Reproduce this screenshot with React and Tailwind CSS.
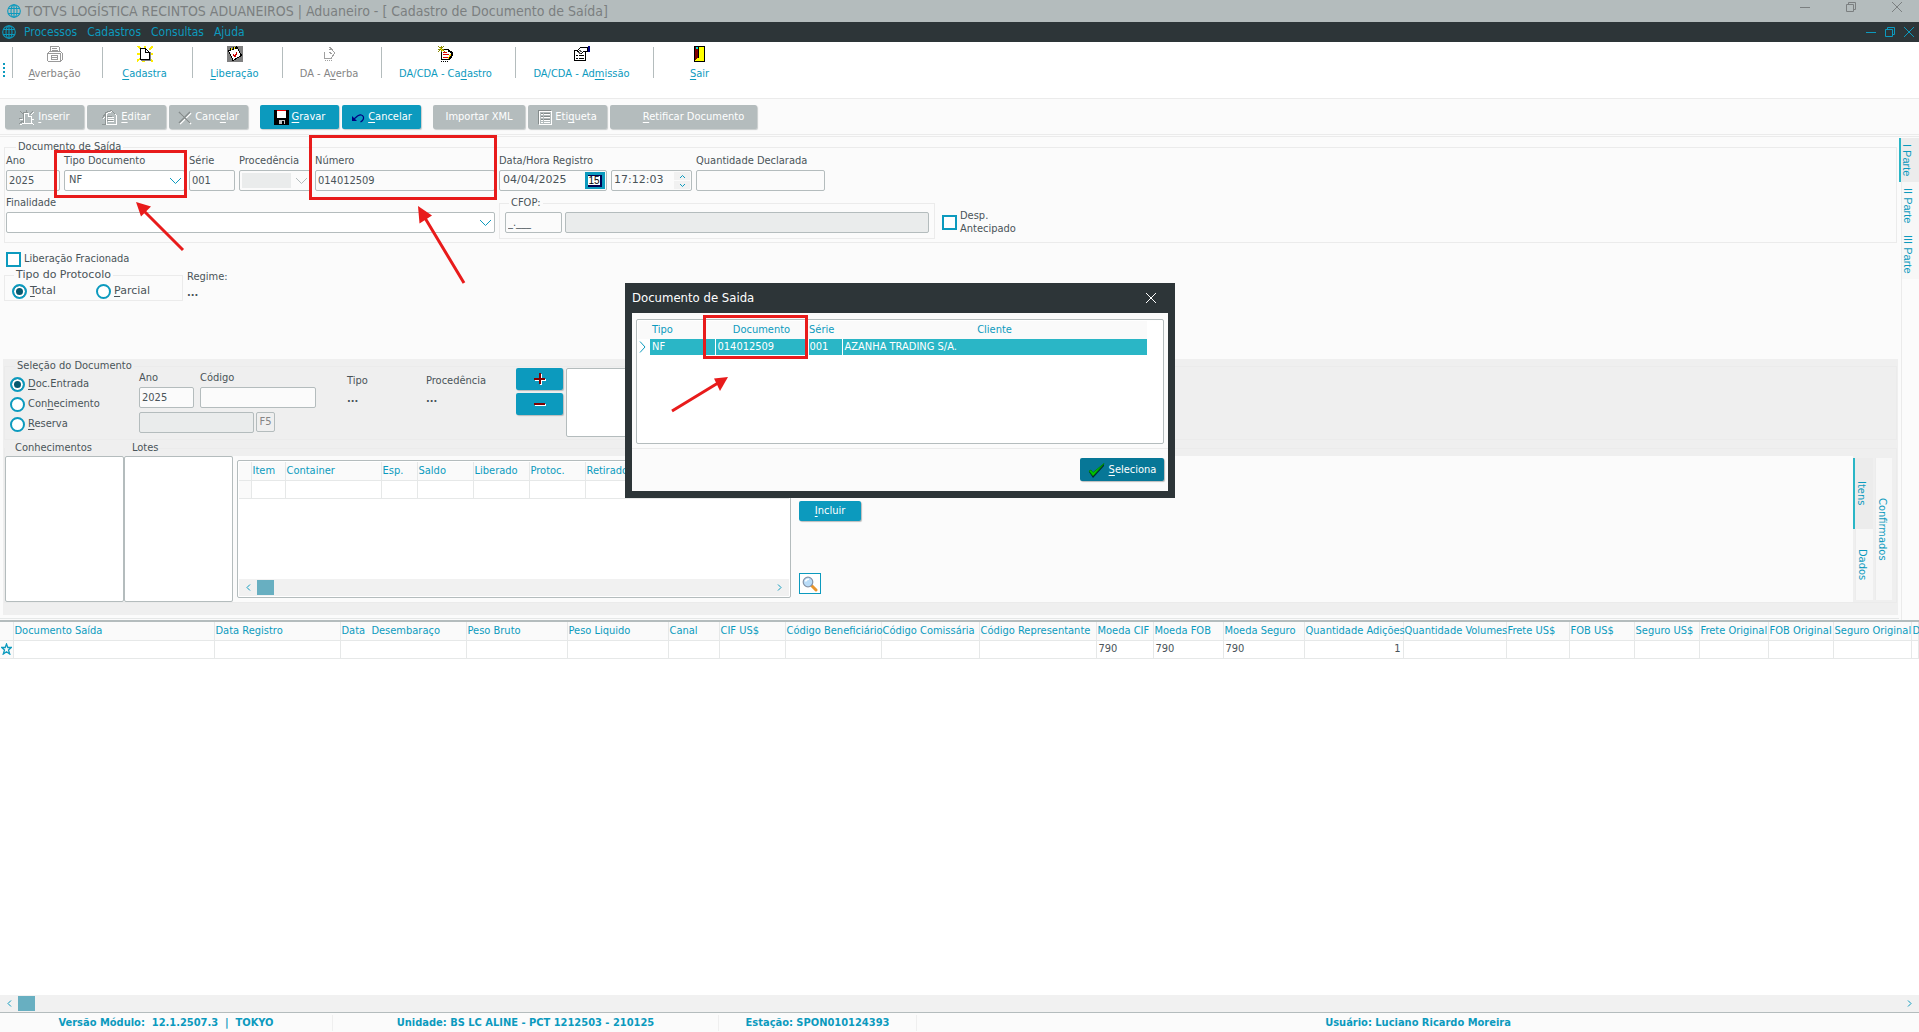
const DOC_COLUMNS = [
    { label: "Documento Saída", width: 201 },
    { label: "Data Registro", width: 126 },
    { label: "Data  Desembaraço", width: 126 },
    { label: "Peso Bruto", width: 101 },
    { label: "Peso Liquido", width: 101 },
    { label: "Canal", width: 51 },
    { label: "CIF US$", width: 66 },
    { label: "Código Beneficiário", width: 96 },
    { label: "Código Comissária", width: 98 },
    { label: "Código Representante", width: 117 },
    { label: "Moeda CIF", width: 57, value: "790" },
    { label: "Moeda FOB", width: 70, value: "790" },
    { label: "Moeda Seguro", width: 81, value: "790" },
    { label: "Quantidade Adições", width: 99, value: "1", right: true },
    { label: "Quantidade Volumes", width: 103 },
    { label: "Frete US$", width: 63 },
    { label: "FOB US$", width: 65 },
    { label: "Seguro US$", width: 65 },
    { label: "Frete Original", width: 69 },
    { label: "FOB Original", width: 65 },
    { label: "Seguro Original", width: 78 },
    { label: "D" }
];

const ITEM_COLUMNS = [
    { label: "Item", width: 34 },
    { label: "Container", width: 96 },
    { label: "Esp.", width: 36 },
    { label: "Saldo", width: 56 },
    { label: "Liberado", width: 56 },
    { label: "Protoc.", width: 56 },
    { label: "Retirado", width: 56 },
    { label: "" }
];

const INPUT = "h-[21px] w-full rounded-xs border border-[#b4bcbd] bg-[#fbfbfb] px-[2px] text-[#4a5459] outline-none disabled:bg-[#eaecec]";

// "&" marks the access key
function Mnemonic({ text }) {

    const [before, after] = text.split("&");

    if (after === undefined) return <span>{text}</span>;

    return (
        <span>
            {before}
            <span className="underline underline-offset-2">{after[0]}</span>
            {after.slice(1)}
        </span>
    );

}

function Chevron({ className }) {

    return (
        <svg viewBox="0 0 13 8" className={`h-2 w-[13px] fill-none stroke-current ${className}`}>
            <path d="M1 1l5.500 5.500L12 1" />
        </svg>
    );

}

function Small({ d, size = 7 }) {

    return (
        <svg viewBox="0 0 7 7" width={size} height={size} className="fill-none stroke-[#0c9abe]">
            <path d={d} />
        </svg>
    );

}

/* ---- icons ---- */

function GlobeIcon({ className }) {

    return (
        <svg viewBox="0 0 14 14" className={`h-3.5 w-3.5 shrink-0 fill-none stroke-[#0c9abe] ${className}`} strokeWidth="1.100">
            <circle cx="7" cy="7" r="6.300" />
            <ellipse cx="7" cy="7" rx="3" ry="6.300" />
            <path d="M1.200 4.500h11.600M1.200 9.500h11.600M7 .700v12.600" />
        </svg>
    );

}

function DrawerIcon() {

    return (
        <svg viewBox="0 0 16 16" className="h-4 w-4 fill-none stroke-[#9a9a9a]" shapeRendering="crispEdges">
            <path d="M3.500 5V.500h8l1 1V5M5 2.500h5M5 4.500h6M.500 15V7.500l2-2h11l2 2v6l-2 2H.500M.500 7.500h13v8M4.500 9.500h6v4h-6zM5 11.500h5" />
        </svg>
    );

}

function NewPageIcon() {

    return (
        <svg viewBox="0 0 16 16" className="h-4 w-4" shapeRendering="crispEdges">
            <path d="M1 0l4 4M16 0l-4 4M0 15l4-3M16 16l-4-4M0 8h3M13 8h3M8 0v3M5 15h3" stroke="#ffee00" strokeWidth="2" />
            <path d="M4 14.500h10M13.500 6v8" stroke="#808080" />
            <path d="M3.500 2.500h5l4 4v7h-9z" fill="#fff" stroke="#000" />
            <path d="M8.500 2.500v4h4" fill="none" stroke="#000" />
        </svg>
    );

}

function ReleaseIcon() {

    return (
        <svg viewBox="0 0 16 16" className="h-4 w-4" shapeRendering="crispEdges">
            <rect width="16" height="16" rx="1" fill="#808080" />
            <path d="M1.500 4.500L10 1.500l4.500 8L6 14.500z" fill="#fff" stroke="#000" />
            <path d="M3 2l1 3M6 1l1 3M9 0l1 3" stroke="#000" />
            <path d="M4 2l1 2M7 1l1 2" stroke="#ffee00" />
            <path d="M6 8l2 3 2-5" fill="none" stroke="#d00000" />
        </svg>
    );

}

function EntryIcon() {

    return (
        <svg viewBox="0 0 16 16" className="h-4 w-4 fill-none stroke-[#a0a0a0]" shapeRendering="crispEdges">
            <path d="M8 3l3 1 3 3-4 5M8 6l3 2M8 1l4 3M3.500 6v6.500h7" />
            <path d="M4 14.500h7" strokeDasharray="1 1" />
        </svg>
    );

}

function RegisterIcon() {

    return (
        <svg viewBox="0 0 16 16" className="h-4 w-4" shapeRendering="crispEdges">
            <path d="M3.500 3.500h6l4 4-3 6h-7z" fill="#fff" stroke="#000" />
            <path d="M5 6.500h4M5 8.500h6M5 11h5" stroke="#e00000" />
            <path d="M0 0l7 6M0 6l6-6M3.500 0v6M0 3.500h6" stroke="#8a8a00" />
            <path d="M2 2l3 3" stroke="#ffee00" />
            <path d="M10 4l4 3v2l-3 5" fill="none" stroke="#000" strokeWidth="2" />
            <path d="M10 13l3-5" stroke="#ffcc00" />
            <path d="M3 15.500h7" stroke="#000" strokeDasharray="1 1" />
        </svg>
    );

}

function AdmissionIcon() {

    return (
        <svg viewBox="0 0 16 16" className="h-4 w-4" shapeRendering="crispEdges">
            <path d="M.500 4.500h11v10H.500z" fill="#fff" stroke="#000" />
            <path d="M2 9.500h2M5 9.500h5M2 12.500h2M5 12.500h5" stroke="#000" />
            <path d="M3 5l4-4h6v4h-3l-3 3z" fill="#fff" stroke="#000" />
            <path d="M4 6l3 2M5 4l3 2" stroke="#555" />
            <path d="M14.500 0v6" stroke="#000080" strokeWidth="2" />
        </svg>
    );

}

function ExitIcon() {

    return (
        <svg viewBox="0 0 11 16" className="h-4 w-[11px]" shapeRendering="crispEdges">
            <rect x=".500" y=".500" width="10" height="15" fill="#ffff00" stroke="#000" />
            <path d="M1 1h3v10l-3 4z" fill="#800000" />
            <path d="M4.500 1v11" stroke="#000" />
            <path d="M2 2h2" stroke="#00e0e0" strokeWidth="2" />
        </svg>
    );

}

function InsertIcon() {

    return (
        <svg viewBox="0 0 16 16" className="h-4 w-4 fill-none" shapeRendering="crispEdges">
            <path d="M5.500 3.500h4v3h3v7h-7zM2 2l3 3M15 2l-3 3M1 15l4-2M15 15l-2-2M1 9.500h3M13 9.500h2" stroke="#fff" />
            <path d="M4.500 13V2.500h4M1 1l3 3M14 1l-3 3M0 14l4-3M0 8.500h3M7.500 0v2" stroke="#8f9696" />
        </svg>
    );

}

function EditIcon() {

    return (
        <svg viewBox="0 0 16 16" className="h-4 w-4 fill-none" shapeRendering="crispEdges">
            <path d="M4.500 3.500l6-2 4 4v9h-10zM6 7.500h6M6 9.500h6M6 11.500h6M1 9l4-4" stroke="#fff" />
            <path d="M3.500 2.500l6-2 4 4M3.500 3v11M5 6.500h5M5 10.500h6M0 8l4-5M0 14h4" stroke="#8f9696" />
        </svg>
    );

}

function CrossIcon() {

    return (
        <svg viewBox="0 0 14 14" className="h-3.5 w-3.5 fill-none">
            <path d="M2 2l11 11M13 2L2 13" stroke="#fff" strokeWidth="1.500" />
            <path d="M1 1l11 11M12 1L1 12" stroke="#858c8c" strokeWidth="1.500" />
        </svg>
    );

}

function FloppyIcon() {

    return (
        <svg viewBox="0 0 16 16" className="h-[15px] w-[15px]" shapeRendering="crispEdges">
            <path d="M0 0h16v16H1l-1-1z" fill="#000" />
            <rect x="3" y="1" width="10" height="8" fill="#fff" />
            <rect x="3" width="10" height="1" fill="#f00000" />
            <rect x="5" y="11" width="7" height="4" fill="#c0c0c0" />
            <rect x="9" y="12" width="2" height="3" fill="#000" />
        </svg>
    );

}

function UndoIcon() {

    return (
        <svg viewBox="0 0 14 10" className="h-2.5 w-3.5 fill-none stroke-[#000080]">
            <path d="M3 6l3.500-3Q11 .500 12.500 4q.500 3-3 5" strokeWidth="1.200" />
            <path d="M1 3v5h5z" fill="#000080" stroke="none" />
        </svg>
    );

}

function LabelIcon() {

    return (
        <svg viewBox="0 0 14 15" className="h-[15px] w-3.5 fill-none" shapeRendering="crispEdges">
            <path d="M1.500 1.500h12v13h-12z" stroke="#fff" />
            <path d="M3 4.500h2M6 4.500h6M3 7.500h2M6 7.500h6M3 10.500h2M6 10.500h6M3 12.500h2M6 12.500h6" stroke="#fff" />
            <path d="M.500 14V.500H13M3 3.500h2M6 3.500h6M3 6.500h2M6 6.500h6M3 9.500h2M6 9.500h6" stroke="#858c8c" />
        </svg>
    );

}

function CheckIcon() {

    return (
        <svg viewBox="0 0 17 15" className="h-[15px] w-[17px]">
            <path d="M1 9l4 6L16 3V1L5 11 3 8z" fill="#002b33" />
            <path d="M1 8l4 5L16 1v-.500L5 9.500 3 7z" fill="#00c800" stroke="#008000" strokeWidth=".800" />
        </svg>
    );

}

function LensIcon() {

    return (
        <svg viewBox="0 0 16 16" className="h-4 w-4">
            <path d="M9.500 9.500l4.500 4.500" stroke="#e8952c" strokeWidth="3" strokeLinecap="round" />
            <circle cx="6" cy="6" r="4.800" fill="#b9dcf8" stroke="#8593a8" strokeWidth="1.200" />
            <path d="M3.500 5.500Q4 3 7 3.200" fill="none" stroke="#fff" strokeWidth="1.500" />
        </svg>
    );

}

function WindowButtons({ className, gap }) {

    return (
        <div className={`flex items-center ${gap} ${className}`}>
            <button aria-label="Minimizar">
                <svg viewBox="0 0 10 10" className="h-2.5 w-2.5 stroke-current"><path d="M0 5.500h10" /></svg>
            </button>
            <button aria-label="Restaurar">
                <svg viewBox="0 0 10 10" className="h-2.5 w-2.5 fill-none stroke-current"><path d="M.500 2.500h7v7h-7zM2.500 2.500v-2h7v7h-2" /></svg>
            </button>
            <button aria-label="Fechar">
                <svg viewBox="0 0 10 10" className="h-2.5 w-2.5 fill-none stroke-current"><path d="M0 0l10 10M10 0L0 10" /></svg>
            </button>
        </div>
    );

}

/* ---- building blocks ---- */

function ToolItem({ icon, label, disabled, className }) {

    return (
        <div className={`flex items-start ${className}`}>
            <span className="mt-px h-[31px] w-px bg-[#b4bcbd]" />
            <button
                disabled={disabled}
                className={`flex grow flex-col items-center gap-1 pr-1.5 leading-4 ${
                    disabled ? "text-[#858585]" : "text-[#0c9abe]"
                }`}
            >
                {icon}
                <Mnemonic text={label} />
            </button>
        </div>
    );

}

function ActionButton({ icon, label, disabled, className }) {

    return (
        <button
            disabled={disabled}
            className={`flex h-6 items-center justify-center gap-[3px] rounded-xs pt-[2px] text-white shadow-[1px_1px_1px_#c8cccc] ${className} ${
                disabled ? "bg-[#b4bcbd]" : "bg-[#0c9abe]"
            }`}
        >
            {icon}
            <Mnemonic text={label} />
        </button>
    );

}

function Field({ id, label, className, children }) {

    return (
        <div className={`flex flex-col gap-px ${className}`}>
            <label htmlFor={id} className="h-4 leading-4 whitespace-nowrap">{label}</label>
            {children}
        </div>
    );

}

function Dropdown({ id, value, disabled }) {

    return (
        <span className="relative block">
            <select
                id={id}
                disabled={disabled}
                defaultValue={value}
                className="h-[21px] w-full appearance-none rounded-xs border border-[#b4bcbd] bg-white px-1 text-[#4a5459] disabled:bg-[#fbfbfb]"
            >
                <option>{value}</option>
            </select>
            {disabled && <span className="absolute top-[3px] left-[3px] h-[15px] w-[49px] bg-[#eaecec]" />}
            <Chevron className={`pointer-events-none absolute top-[7px] right-[3px] ${disabled ? "text-[#b4bcbd]" : "text-[#0c9abe]"}`} />
        </span>
    );

}

function Radio({ name, label, checked }) {

    return (
        <label className="flex items-center gap-[3px]">
            <input
                type="radio"
                name={name}
                defaultChecked={checked}
                className="h-[15px] w-[15px] shrink-0 appearance-none rounded-full border-2 border-[#0c9abe] bg-white checked:bg-[#075a70] checked:shadow-[inset_0_0_0_2px_#fff]"
            />
            <Mnemonic text={label} />
        </label>
    );

}

function Checkbox({ className, children }) {

    return (
        <label className={`flex items-center gap-[3px] ${className}`}>
            <input type="checkbox" className="h-[15px] w-[15px] shrink-0 appearance-none border-2 border-[#0c9abe] bg-white" />
            <span>{children}</span>
        </label>
    );

}

function VTab({ active, className, children }) {

    return (
        <button
            className={`flex items-end justify-center leading-3 text-[#0c9abe] [writing-mode:vertical-rl] ${className} ${
                active ? "border-l-2 border-[#2ab6c6] bg-[#ececec]" : "ml-[2px] border-l border-[#ececec] bg-[#f7f7f7]"
            }`}
        >
            {children}
        </button>
    );

}

function ScrollBar() {

    return (
        <div className="flex h-[17px] shrink-0 items-center bg-[#f1f1f1] px-1.5">
            <Small d="M5 .500L2 3.500l3 3" />
            <span className="ml-[5px] h-[15px] w-[17px] bg-[#68afc1]" />
            <span className="grow" />
            <Small d="M2 .500l3 3-3 3" />
        </div>
    );

}

function Grid({ columns, marker, indicator }) {

    return (
        <table className="w-full table-fixed border-collapse text-left whitespace-pre">
            <thead>
                <tr className="h-[18px] bg-[#fafafa] text-[#0c9abe]">
                    <th className={`${indicator} border-r border-b border-[#e6e8e8] p-0`} />
                    {columns.map((col) => (
                        <th
                            key={col.label}
                            style={{ width: col.width }}
                            className="border-r border-b border-[#e6e8e8] p-0 pl-px font-normal"
                        >
                            {col.label}
                        </th>
                    ))}
                </tr>
            </thead>
            <tbody>
                <tr className="h-[18px] bg-white">
                    <td className="border-r border-b border-[#e6e8e8] bg-[#fafafa] p-0">{marker}</td>
                    {columns.map((col) => (
                        <td
                            key={col.label}
                            className={`border-r border-b border-[#e6e8e8] p-0 px-[2px] ${col.right ? "text-right" : ""}`}
                        >
                            {col.value}
                        </td>
                    ))}
                </tr>
            </tbody>
        </table>
    );

}

function Toolbar() {

    return (
        <div className="flex h-[57px] items-start border-b border-[#ebebeb] bg-white pt-1">
            <div className="mt-[17px] mr-[7px] ml-[3px] h-[14px] border-l-2 border-dotted border-[#0c9abe]" />
            <ToolItem className="w-[90px]" label="&Averbação" icon={<DrawerIcon />} disabled />
            <ToolItem className="w-[90px]" label="&Cadastra" icon={<NewPageIcon />} />
            <ToolItem className="w-[90px]" label="&Liberação" icon={<ReleaseIcon />} />
            <ToolItem className="w-[99px]" label="DA - A&verba" icon={<EntryIcon />} disabled />
            <ToolItem className="w-[134px]" label="DA/CDA - Ca&dastro" icon={<RegisterIcon />} />
            <ToolItem className="w-[138px]" label="DA/CDA - Ad&missão" icon={<AdmissionIcon />} />
            <ToolItem className="w-[98px]" label="&Sair" icon={<ExitIcon />} />
        </div>
    );

}

function Actions() {

    return (
        <div className="flex h-9 items-center gap-[3px] border-b border-[#ebebeb] pl-[5px]">
            <ActionButton className="w-[79px]" label="&Inserir" icon={<InsertIcon />} disabled />
            <ActionButton className="w-[79px]" label="&Editar" icon={<EditIcon />} disabled />
            <ActionButton className="w-[79px]" label="Canc&elar" icon={<CrossIcon />} disabled />
            <ActionButton className="ml-[9px] w-[79px]" label="&Gravar" icon={<FloppyIcon />} />
            <ActionButton className="w-[79px]" label="&Cancelar" icon={<UndoIcon />} />
            <ActionButton className="ml-[9px] w-[92px]" label="Importar XML" disabled />
            <ActionButton className="w-[79px]" label="Eti&queta" icon={<LabelIcon />} disabled />
            <ActionButton className="w-[147px] pl-5" label="&Retificar Documento" disabled />
        </div>
    );

}

function DocumentForm() {

    return (
        <fieldset className="mr-[2px] ml-1 border border-[#ebebeb] pb-[3px] pl-px">
            <legend className="ml-2.5 px-[2px] leading-3">Documento de Saída</legend>
            <div className="flex gap-1">
                <Field id="ano" label="Ano" className="w-[54px]">
                    <input id="ano" className={INPUT} defaultValue="2025" />
                </Field>
                <Field id="tipo" label="Tipo Documento" className="w-[121px]">
                    <Dropdown id="tipo" value="NF" />
                </Field>
                <Field id="serie" label="Série" className="w-[46px]">
                    <input id="serie" className={INPUT} defaultValue="001" />
                </Field>
                <Field id="proc" label="Procedência" className="w-[72px]">
                    <Dropdown id="proc" value="" disabled />
                </Field>
                <Field id="numero" label="Número" className="w-[180px]">
                    <input id="numero" className={INPUT} defaultValue="014012509" />
                </Field>
                <Field id="data" label="Data/Hora Registro" className="w-[108px]">
                    <div className="flex h-[21px] items-center rounded-xs border border-[#b4bcbd] pr-px">
                        <input id="data" className="w-0 grow px-[3px] font-['DejaVu_Sans'] outline-none" defaultValue="04/04/2025" />
                        <button aria-label="Calendário" className="flex h-[17px] w-5 items-center justify-center bg-[#0c9abe]">
                            <span className="h-3 w-3.5 border-t border-r-2 border-b-2 border-[#000050] bg-white text-center font-['Liberation_Sans'] text-[10px] leading-[9px] text-black">15</span>
                        </button>
                    </div>
                </Field>
                <div className="mt-[17px] flex h-[21px] w-[81px] items-center rounded-xs border border-[#b4bcbd] pr-px">
                    <input aria-label="Hora" className="w-0 grow pl-[2px] font-['DejaVu_Sans'] outline-none" defaultValue="17:12:03" />
                    <div className="flex flex-col gap-px">
                        <button aria-label="Mais" className="flex h-2 w-4 items-center justify-center bg-[#f1f1f1]"><Small d="M1 5l2.500-2.500L6 5" /></button>
                        <button aria-label="Menos" className="flex h-2 w-4 items-center justify-center bg-[#f1f1f1]"><Small d="M1 2l2.500 2.500L6 2" /></button>
                    </div>
                </div>
                <Field id="qtd" label="Quantidade Declarada" className="w-[129px]">
                    <input id="qtd" className={INPUT} />
                </Field>
            </div>
            <div className="flex items-start gap-1 pt-1">
                <Field id="finalidade" label="Finalidade" className="w-[489px]">
                    <Dropdown id="finalidade" value="" />
                </Field>
                <fieldset className="w-[436px] border border-[#ebebeb] px-[5px] pb-[5px]">
                    <legend className="ml-1 px-[2px] leading-4">CFOP:</legend>
                    <div className="flex gap-[3px] pt-px">
                        <input aria-label="CFOP" className={`${INPUT} max-w-[57px]`} defaultValue="_.___" />
                        <input aria-label="Descrição CFOP" className={INPUT} disabled />
                    </div>
                </fieldset>
                <Checkbox className="ml-[3px] pt-3.5 leading-[13px]">Desp.<br />Antecipado</Checkbox>
            </div>
        </fieldset>
    );

}

function Protocol() {

    return (
        <div className="pb-[58px] pl-1">
            <Checkbox className="mt-2 ml-[2px] h-4">Liberação Fracionada</Checkbox>
            <div className="flex gap-1">
                <fieldset className="w-[179px] border border-[#ebebeb] pl-[7px] font-['DejaVu_Sans']">
                    <legend className="ml-[2px] px-[2px] leading-4">Tipo do Protocolo</legend>
                    <div className="flex h-4 items-center">
                        <div className="w-[84px]"><Radio name="protocolo" label="&Total" checked /></div>
                        <Radio name="protocolo" label="&Parcial" />
                    </div>
                </fieldset>
                <div className="flex flex-col pt-[2px] leading-4">
                    <span>Regime:</span>
                    <span className="font-bold">...</span>
                </div>
            </div>
        </div>
    );

}

function Selection() {

    return (
        <fieldset className="mx-px mt-px border border-[#ebebeb] pb-[2px] pl-[5px]">
            <legend className="ml-[5px] px-[2px] leading-3">Seleção do Documento</legend>
            <div className="flex items-start">
                <div className="flex w-[129px] flex-col pt-[2px] leading-5">
                    <Radio name="origem" label="&Doc.Entrada" checked />
                    <Radio name="origem" label="Con&hecimento" />
                    <Radio name="origem" label="&Reserva" />
                </div>
                <div className="-mt-[2px] flex w-[208px] flex-col gap-1">
                    <div className="flex gap-1.5">
                        <Field id="sel-ano" label="Ano" className="w-[55px]">
                            <input id="sel-ano" className={INPUT} defaultValue="2025" />
                        </Field>
                        <Field id="codigo" label="Código" className="w-[116px]">
                            <input id="codigo" className={INPUT} />
                        </Field>
                    </div>
                    <div className="flex gap-[2px]">
                        <input aria-label="Reserva" className={`${INPUT} max-w-[115px]`} disabled />
                        <button className="h-5 w-[19px] rounded-xs border border-[#b4bcbd] text-[#858585]">F5</button>
                    </div>
                </div>
                <div className="flex w-[79px] flex-col leading-[18px]">
                    <span>Tipo</span>
                    <span className="font-bold">...</span>
                </div>
                <div className="flex w-[90px] flex-col leading-[18px]">
                    <span>Procedência</span>
                    <span className="font-bold">...</span>
                </div>
                <div className="-mt-1 flex flex-col gap-[3px]">
                    <button aria-label="Adicionar" className="flex h-[22px] w-[47px] items-center justify-center rounded-xs bg-[#0c9abe] shadow-[1px_1px_1px_#bbb]">
                        <svg viewBox="0 0 12 12" className="h-3 w-3" shapeRendering="crispEdges">
                            <path d="M1 7h11M7 1v11" stroke="#fff" strokeWidth="2" />
                            <path d="M0 6h11M6 0v11" stroke="#800000" strokeWidth="2" />
                        </svg>
                    </button>
                    <button aria-label="Remover" className="flex h-[22px] w-[47px] items-center justify-center rounded-xs bg-[#0c9abe] shadow-[1px_1px_1px_#bbb]">
                        <svg viewBox="0 0 12 12" className="h-3 w-3" shapeRendering="crispEdges">
                            <path d="M1 7h11" stroke="#fff" strokeWidth="2" />
                            <path d="M0 6h11" stroke="#800000" strokeWidth="2" />
                        </svg>
                    </button>
                </div>
                <div className="-mt-1 ml-[3px] h-[69px] w-[300px] rounded-xs border border-[#b4bcbd] bg-white" />
            </div>
        </fieldset>
    );

}

function Items() {

    return (
        <fieldset className="mx-px border border-[#ebebeb]">
            <legend className="flex pl-2.5 leading-4">
                <span className="w-[117px]">Conhecimentos</span>
                <span>Lotes</span>
            </legend>
            <div className="flex h-[146px]">
                <div className="w-[119px] rounded-xs border border-[#b4bcbd] bg-white" />
                <div className="w-[109px] rounded-xs border border-[#b4bcbd] bg-white" />
                <div className="flex grow gap-2 bg-[#fbfbfb] py-1 pl-1">
                    <div className="flex w-[554px] flex-col overflow-hidden rounded-xs border border-[#b4bcbd] bg-white p-px">
                        <Grid columns={ITEM_COLUMNS} indicator="w-3" />
                        <span className="grow" />
                        <ScrollBar />
                    </div>
                    <div className="flex flex-col items-start justify-between pt-[41px] pb-1">
                        <button className="h-5 w-[62px] rounded-xs bg-[#0c9abe] text-white shadow-[1px_1px_1px_#bbb]"><Mnemonic text="&Incluir" /></button>
                        <button aria-label="Pesquisar" className="flex h-[21px] w-[22px] items-center justify-center border border-[#0c9abe] bg-white"><LensIcon /></button>
                    </div>
                </div>
                <div className="flex w-5 flex-col py-0.5">
                    <VTab active className="h-[71px]">Itens</VTab>
                    <VTab className="h-[71px]">Dados</VTab>
                </div>
                <div className="mr-1 flex py-0.5">
                    <VTab className="w-[17px]">Confirmados</VTab>
                </div>
            </div>
        </fieldset>
    );

}

function Dialog() {

    return (
        <section
            role="dialog"
            aria-label="Documento de Saida"
            className="absolute top-[283px] left-[625px] flex w-[550px] flex-col bg-[#2d3538] px-[7px] pb-[7px]"
        >
            <header className="flex h-[30px] items-center justify-between pr-3 text-white">
                <h2 className="text-[13px] font-medium">Documento de Saida</h2>
                <button aria-label="Fechar">
                    <svg viewBox="0 0 10 10" className="h-2.5 w-2.5 stroke-current"><path d="M0 0l10 10M10 0L0 10" /></svg>
                </button>
            </header>
            <div className="border-b border-[#ebebeb] bg-[#fbfbfb] px-1 pt-1.5 pb-1">
                <div className="h-[125px] rounded-xs border border-[#b4bcbd] bg-white p-px pr-4">
                    <table className="w-full table-fixed border-collapse text-left">
                        <thead>
                            <tr className="h-[18px] bg-[#fafafa] text-[#0c9abe]">
                                <th className="w-3 p-0" />
                                <th className="w-[65px] p-0 pl-[2px] font-normal">Tipo</th>
                                <th className="w-[93px] p-0 text-center font-normal">Documento</th>
                                <th className="w-[34px] p-0 pl-px font-normal">Série</th>
                                <th className="p-0 text-center font-normal">Cliente</th>
                            </tr>
                        </thead>
                        <tbody>
                            <tr className="h-4 bg-[#2ab6c6] leading-4 text-white">
                                <td className="bg-white p-0 pl-px">
                                    <svg viewBox="0 0 7 12" className="h-3 w-[7px] fill-none stroke-[#0c9abe]"><path d="M1 .500L6 6l-5 5.500" /></svg>
                                </td>
                                <td className="border-r border-white p-0 pl-[2px]">NF</td>
                                <td className="border-r border-white p-0 pl-[2px]">014012509</td>
                                <td className="border-r border-white p-0 pl-px">001</td>
                                <td className="p-0 pl-[2px]">AZANHA TRADING S/A.</td>
                            </tr>
                        </tbody>
                    </table>
                </div>
            </div>
            <footer className="flex justify-end bg-[#fbfbfb] px-1 pt-[9px] pb-2.5">
                <button className="flex h-[23px] w-[84px] items-center justify-center gap-1 rounded-xs bg-[#077797] pt-[2px] text-white shadow-[1px_1px_1px_#bbb]">
                    <CheckIcon />
                    <Mnemonic text="&Seleciona" />
                </button>
            </footer>
        </section>
    );

}

// red call-outs drawn over the window
function Callouts() {

    return (
        <svg className="pointer-events-none absolute inset-0 h-full w-full">
            <g fill="none" stroke="#e81b1b" strokeWidth="3">
                <rect x="55.500" y="151.500" width="130" height="45" />
                <rect x="310.500" y="136.500" width="185" height="62" />
                <rect x="704.500" y="316.500" width="102" height="41" />
                <path d="M183 250L144 211M464 283L425 218M672 411l46-28" />
            </g>
            <g fill="#e81b1b">
                <path d="M136 202l15 4.500-10 10z" />
                <path d="M418 206l14 9.500-12.500 8z" />
                <path d="M728 377l-8 14-6-12.500z" />
            </g>
        </svg>
    );

}

export default function App() {

    return (
        <div className="relative flex min-h-screen flex-col overflow-hidden bg-[#fbfbfb] font-['DejaVu_Sans_Condensed','DejaVu_Sans',sans-serif] text-[11px] text-[#4a5459]">

            <header className="flex h-[22px] items-center bg-[#b4bcbd] text-[#7b7f80]">
                <GlobeIcon className="mr-1 ml-[7px]" />
                <h1 className="grow text-[14px]">TOTVS LOGÍSTICA RECINTOS ADUANEIROS | Aduaneiro - [ Cadastro de Documento de Saída]</h1>
                <WindowButtons gap="gap-9" className="pr-[17px] pb-2" />
            </header>

            <nav className="flex h-5 items-center gap-2.5 bg-[#2d3538] pl-[2px] text-[12px] text-[#0c9abe]">
                <GlobeIcon className="-mr-[2px]" />
                <a href="#processos">Processos</a>
                <a href="#cadastros">Cadastros</a>
                <a href="#consultas">Consultas</a>
                <a href="#ajuda">Ajuda</a>
                <WindowButtons gap="gap-[9px]" className="ml-auto pr-[5px]" />
            </nav>

            <Toolbar />
            <Actions />

            <div className="mt-px flex border-t border-[#ebebeb]">
                <main className="flex grow flex-col pt-1">
                    <DocumentForm />
                    <Protocol />
                    <div className="mr-px ml-[3px] bg-[#efefef] pb-3">
                        <Selection />
                        <Items />
                    </div>
                    <div className="mb-px h-1 border-b border-[#e6e8e8]" />
                </main>
                <div className="flex w-5 flex-col pt-px font-['Liberation_Sans',sans-serif]">
                    <VTab active className="h-11">I Parte</VTab>
                    <VTab className="h-[47px]">II Parte</VTab>
                    <VTab className="h-[50px]">III Parte</VTab>
                    <span className="ml-[2px] grow border-l border-[#ebebeb]" />
                </div>
            </div>

            <section className="flex grow flex-col overflow-hidden border-y border-t-2 border-[#b4bcbd] bg-white">
                <div className="grow overflow-hidden">
                    <Grid
                        columns={DOC_COLUMNS}
                        indicator="w-[13px]"
                        marker={
                            <svg viewBox="0 0 11 12" className="ml-px h-3 w-[11px] fill-none stroke-[#0c9abe]" strokeWidth="1.300">
                                <path d="M5.500 1l1.300 3.500h3.500L7.500 7l1.200 4-3.200-2.300L2.300 11l1.200-4L.700 4.500h3.500z" />
                            </svg>
                        }
                    />
                </div>
                <ScrollBar />
            </section>

            <footer className="flex h-[19px] items-center bg-[#fbfbfb] pt-px font-bold text-[#0c9abe]">
                <span className="w-[333px] border-r border-[#efefef] text-center whitespace-pre">Versão Módulo:  12.1.2507.3  |  TOKYO</span>
                <span className="w-[386px] border-r border-[#efefef] text-center">Unidade: BS LC ALINE - PCT 1212503 - 210125</span>
                <span className="w-[198px] border-r border-[#efefef] text-center">Estação: SPON010124393</span>
                <span className="grow text-center">Usuário: Luciano Ricardo Moreira</span>
            </footer>

            <Dialog />
            <Callouts />
        </div>
    );

}
